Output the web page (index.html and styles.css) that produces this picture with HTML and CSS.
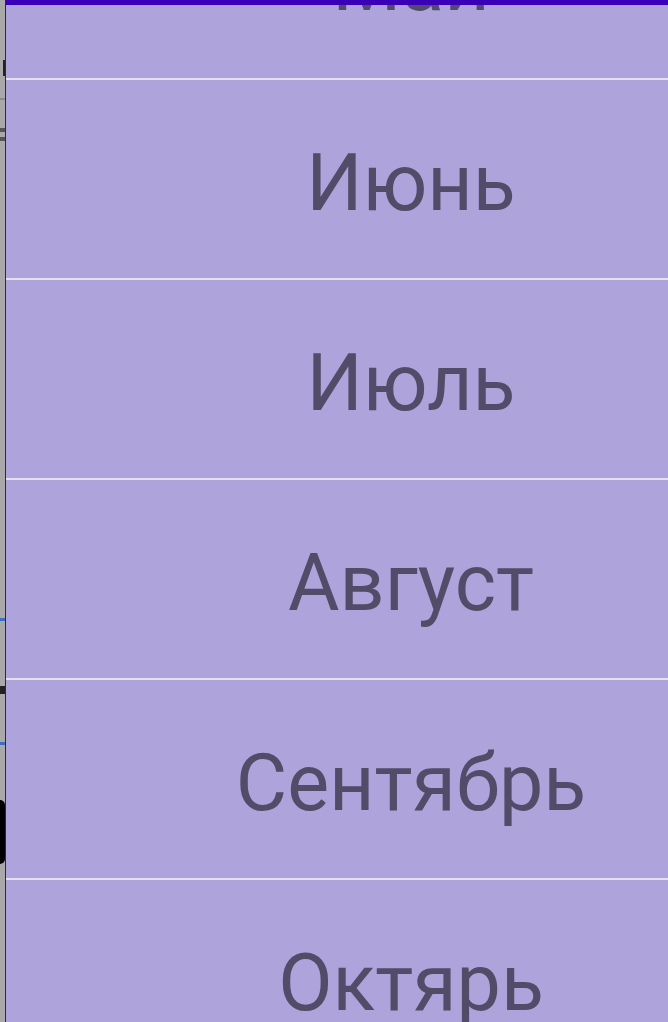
FILE: index.html
```html
<!DOCTYPE html>
<html lang="ru">
<head>
<meta charset="utf-8">
<title>Месяцы</title>
<link rel="stylesheet" href="styles.css">
</head>
<body>
<div class="screen">
  <div class="behind">
    <span class="frag f1"></span>
    <span class="frag f2"></span>
    <span class="frag f3"></span>
    <span class="frag f4"></span>
    <span class="frag f5 blue"></span>
    <span class="frag f6"></span>
    <span class="frag f7 blue"></span>
    <span class="frag f8"></span>
  </div>
  <div class="edge"></div>
  <div class="panel">
    <ul class="months">
      <li class="month">Май</li>
      <li class="month">Июнь</li>
      <li class="month">Июль</li>
      <li class="month">Август</li>
      <li class="month">Сентябрь</li>
      <li class="month">Октярь</li>
    </ul>
  </div>
  <div class="topbar"></div>
</div>
</body>
</html>
```

FILE: styles.css
```css
html, body {
  margin: 0;
  padding: 0;
  height: 100%;
  overflow: hidden;
  background: #aea3db;
}

.screen {
  position: relative;
  display: flex;
  height: 1022px;
  width: 668px;
  overflow: hidden;
}

.behind {
  position: relative;
  width: 5px;
  flex: none;
  background: #a9a9a9;
}

.frag {
  position: absolute;
  left: 0;
  width: 5px;
  background: #222;
}
.frag.blue { background: #3d6fc0; height: 3px; }
.f1 { top: 60px; left: 3px; width: 2px; height: 16px; }
.f2 { top: 98px; height: 2px; background: #8a8a8a; }
.f3 { top: 128px; height: 4px; background: #555; }
.f4 { top: 137px; height: 4px; background: #555; }
.f5 { top: 618px; }
.f6 { top: 686px; height: 8px; }
.f7 { top: 742px; }
.f8 { top: 800px; height: 64px; border-radius: 0 30px 30px 0; background: #000; }

.edge {
  width: 1px;
  flex: none;
  background: #2c2c2c;
}

.panel {
  flex: 1;
  min-width: 0;
  overflow: hidden;
  background: #aea3db;
}

.months {
  list-style: none;
  margin: -120px 0 0 0;
  padding: 0;
  width: 810px;
}

.month {
  box-sizing: border-box;
  height: 200px;
  padding-top: 8px;
  border-bottom: 2px solid #e4e0ee;
  display: flex;
  align-items: center;
  justify-content: center;
  font-family: Roboto, "Noto Sans", sans-serif;
  font-size: 79px;
  line-height: 1;
  color: #524c68;
}

.topbar {
  position: absolute;
  top: 0;
  left: 6px;
  right: 0;
  height: 5px;
  background: #3a00b8;
}
```
